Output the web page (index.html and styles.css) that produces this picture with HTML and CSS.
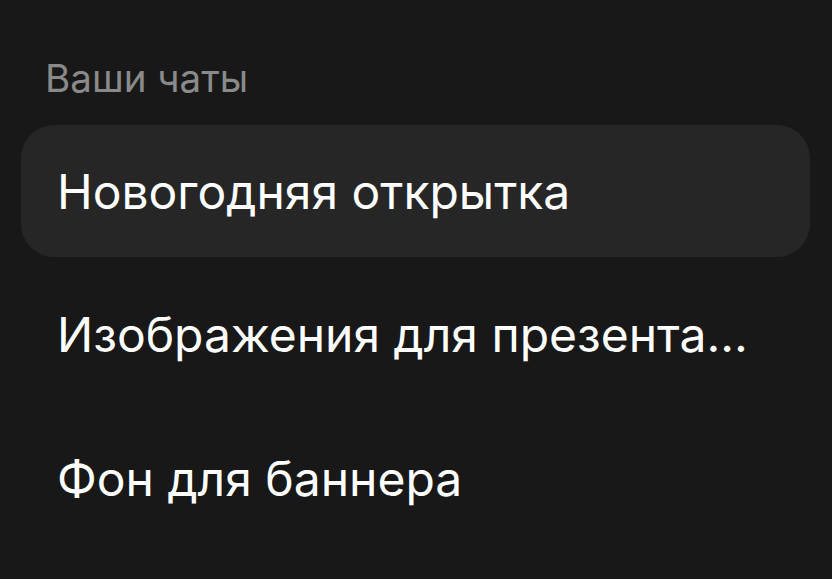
FILE: index.html
```html
<!DOCTYPE html>
<html lang="ru">
<head>
<meta charset="utf-8">
<link rel="stylesheet" href="styles.css">
</head>
<body>
<div class="panel">
  <div class="section-title">Ваши чаты</div>
  <ul class="chat-list">
    <li class="chat-item active">Новогодняя открытка</li>
    <li class="chat-item">Изображения для презента...</li>
    <li class="chat-item">Фон для баннера</li>
  </ul>
</div>
</body>
</html>
```
FILE: styles.css
```css
html, body {
  margin: 0;
  padding: 0;
  background: #181818;
}
body {
  font-family: Inter, "Noto Sans", sans-serif;
  -webkit-font-smoothing: antialiased;
}
.panel {
  padding: 54px 22px 0 21px;
}
.section-title {
  color: #8a8a8a;
  font-size: 38.6px;
  line-height: 48px;
  padding-left: 24px;
  margin-bottom: 23px;
}
.chat-list {
  list-style: none;
  margin: 0;
  padding: 0;
  display: flex;
  flex-direction: column;
  gap: 11.5px;
}
.chat-item {
  height: 132px;
  display: flex;
  align-items: center;
  padding-left: 36px;
  border-radius: 33px;
  color: #ffffff;
  font-size: 48px;
  white-space: nowrap;
  overflow: hidden;
}
.chat-item.active {
  background: #262626;
}
```
